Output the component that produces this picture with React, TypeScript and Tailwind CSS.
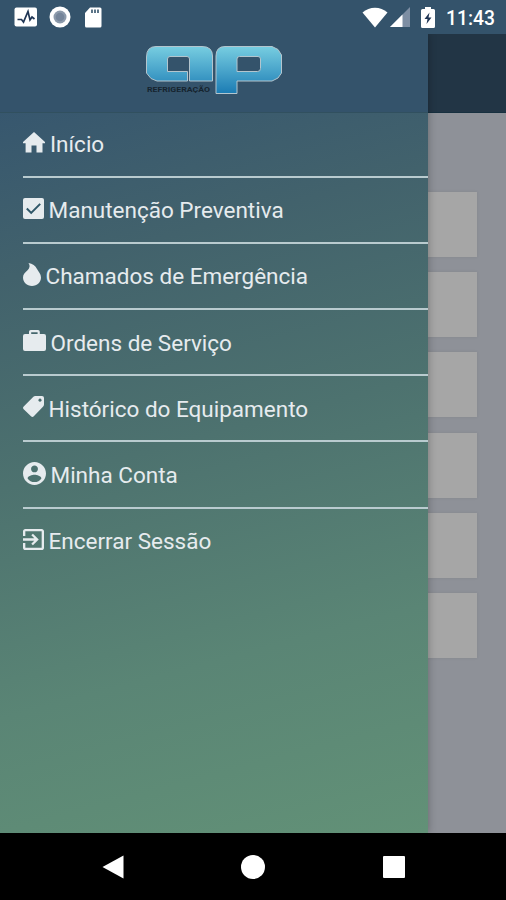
import React from 'react';
import { IoMdContact, IoMdExit } from 'react-icons/io';

interface MenuItem {
  label: string;
  icon: React.ReactNode;
  textClass: string;
}

const items: MenuItem[] = [
  {
    label: 'Início',
    icon: (
      <svg viewBox="0 0 22 21" className="w-[22px] h-[21px]">
        <path
          d="M11 0L22 10v1.200H19.500V20.500H13.500v-7h-5v7H2.600V11.200H0V10z"
          fill="currentColor"
        />
      </svg>
    ),
    textClass: 'ml-[5px]',
  },
  {
    label: 'Manutenção Preventiva',
    icon: (
      <svg viewBox="0 0 21 21" className="w-[21px] h-[21px]">
        <rect width="21" height="21" rx="2" fill="currentColor" />
        <path d="M3.800 10.500l4.400 4.400 9-9" fill="none" stroke="#2f5768" strokeWidth="2" />
      </svg>
    ),
    textClass: 'ml-[4.500px]',
  },
  {
    label: 'Chamados de Emergência',
    icon: (
      <svg viewBox="0 0 18 23" className="w-[18px] h-[23px]">
        <path
          d="M5.500 0C9.500.6 12.500 2.800 14 6 15.500 9 18 11 18 14.500 18 19.300 14.200 23 9 23s-9-3.700-9-8.500C0 11.200 2.200 9.500 4.300 7.500 6.800 5.300 7.400 2.500 5.500 0z"
          fill="currentColor"
        />
      </svg>
    ),
    textClass: 'ml-[4.500px]',
  },
  {
    label: 'Ordens de Serviço',
    icon: (
      <svg viewBox="0 0 23 21" className="w-[23px] h-[21px]">
        <path
          d="M6 4V1.800Q6 0 7.800 0h7.200q1.800 0 1.800 1.800V4H21q2 0 2 2v13q0 2-2 2H2q-2 0-2-2V6q0-2 2-2zM8.200 4h6.400V2.200H8.200z"
          fill="currentColor"
          fillRule="evenodd"
        />
      </svg>
    ),
    textClass: 'ml-[4.500px]',
  },
  {
    label: 'Histórico do Equipamento',
    icon: (
      <svg viewBox="0 0 21 21" className="w-[21px] h-[21px]">
        <path
          d="M12.200 0H19q2 0 2 2v6.500q0 1.200-.8 2l-9.400 9.700q-1.400 1.400-2.800 0L.7 13.200q-1.400-1.400 0-2.800L10.400.7Q11.200 0 12.200 0zM17 2.600a1.600 1.600 0 1 0 .01 0z"
          fill="currentColor"
          fillRule="evenodd"
        />
      </svg>
    ),
    textClass: 'ml-[4.500px]',
  },
  {
    label: 'Minha Conta',
    icon: <IoMdContact viewBox="48 48 416 416" className="w-[23px] h-[23px]" />,
    textClass: 'ml-[4.500px]',
  },
  {
    label: 'Encerrar Sessão',
    icon: <IoMdExit viewBox="64 64 384 384" className="w-[21px] h-[21px]" />,
    textClass: 'ml-[4.500px]',
  },
];

const cards = [1, 2, 3, 4, 5, 6];

const StatusBar: React.FC = () => (
  <div className="h-[34px] shrink-0 bg-[#34536b] flex items-center justify-between pl-[14px] pr-[11px] text-white">
    <div className="flex items-center">
      <svg viewBox="0 0 24 20" className="w-6 h-5">
        <rect x="0.500" y="0.500" width="22.500" height="19" rx="2" fill="currentColor" />
        <path d="M3.500 12.500h4l2 2.500 4.500-10.500 2 8.500 2-3 2.500 2" fill="none" stroke="#1f3554" strokeWidth="1.700" />
      </svg>
      <svg viewBox="0 0 22 22" className="w-[22px] h-[22px] ml-[11px]">
        <circle cx="11" cy="11" r="10.500" fill="currentColor" />
        <circle cx="11" cy="11" r="6.500" fill="#8c9aab" />
        <circle cx="11" cy="11" r="4.300" fill="#75859a" />
      </svg>
      <svg viewBox="0 0 18 21" className="w-[18px] h-[21px] ml-[13px]">
        <path d="M6 0.500h10q1.500 0 1.500 1.500v17q0 1.500-1.500 1.500H2.500Q1 20.500 1 19V6z" fill="currentColor" />
        <path d="M8 2.500v3.500M11 2.500v3.500M14 2.500v3.500" stroke="#34536b" strokeWidth="1.600" />
      </svg>
    </div>
    <div className="flex items-center">
      <svg viewBox="0 0 26 21" className="w-[26px] h-[21px]">
        <path d="M0.500 5.500C7.500-1 18.500-1 25.500 5.500L13 20.500z" fill="currentColor" />
      </svg>
      <svg viewBox="0 0 20 20" className="w-5 h-5 ml-0.5">
        <path d="M20 0v20H0z" fill="#7d8ea3" />
        <path d="M12.500 7.500V20H0z" fill="currentColor" />
      </svg>
      <svg viewBox="0 0 14 21" className="w-[14px] h-[21px] ml-[11px]">
        <path d="M4 0h6v2h2.500q1.500 0 1.500 1.500v16q0 1.500-1.500 1.500h-11Q0 21 0 19.500v-16Q0 2 1.500 2H4z" fill="currentColor" />
        <path d="M8.500 5.500L3.500 12h3l-1 5 5-6.500h-3z" fill="#1f3554" />
      </svg>
      <span className="ml-[11px] text-[19.300px] leading-none font-medium relative top-[1.500px]">11:43</span>
    </div>
  </div>
);

const Logo: React.FC = () => (
  <svg viewBox="0 0 138 52" className="w-[138px] h-[52px]">
    <defs>
      <linearGradient id="logo" x1="0" y1="0" x2="0" y2="50" gradientUnits="userSpaceOnUse">
        <stop offset="0" stopColor="#7ad0e2" />
        <stop offset="0.500" stopColor="#4aa5cb" />
        <stop offset="1" stopColor="#1879b2" />
      </linearGradient>
    </defs>
    <g fill="url(#logo)" stroke="#b3c5ce" strokeWidth="1">
      <path d="M11 1.500H57Q67.500 1.500 67.500 11V36H44.500V14Q44.500 11.500 42 11.500H25Q22.500 11.500 22.500 14V26.500H42.500V36H12L6 33.500 1.500 28V12Q1.500 1.500 11 1.500z" />
      <path d="M80 1.500H127L133 4.500 136.500 10V28L133 33 127 36H92V48.500H71V11Q71 1.500 80 1.500zM94.500 11.500Q92 11.500 92 14V26.500H112.500Q115.500 26.500 115.500 23.500V14Q115.500 11.500 113 11.500z" />
    </g>
    <text x="2" y="46.500" fontSize="8" fontWeight="700" fill="#16242f" textLength="63" lengthAdjust="spacingAndGlyphs">
      REFRIGERAÇÃO
    </text>
  </svg>
);

const Drawer: React.FC = () => (
  <aside className="w-[428px] shrink-0 flex flex-col relative z-10 shadow-[0_0_8px_rgba(0,0,0,0.3)] bg-[linear-gradient(165deg,#35556f_5%,#42626c_27%,#4d726f_50%,#5a8575_75%,#629177_100%)]">
    <div className="h-[79px] shrink-0 bg-[#34536b] border-b border-[#31505f] flex justify-center items-start pt-[11px]">
      <Logo />
    </div>
    <nav className="flex flex-col -mt-px pl-[23px] text-[#e6ebee]">
      {items.map((item, i) => (
        <div
          key={item.label}
          className={`h-[66.100px] flex items-center border-b-2 ${i < items.length - 1 ? 'border-[#b9cbcf]' : 'border-transparent'}`}
        >
          <span className="shrink-0 relative -top-[1.500px]">{item.icon}</span>
          <span className={`text-[22.500px] leading-none whitespace-nowrap relative top-[0.500px] ${item.textClass}`}>
            {item.label}
          </span>
        </div>
      ))}
    </nav>
  </aside>
);

const App: React.FC = () => {
  return (
    <div className="w-[506px] h-[900px] flex flex-col overflow-hidden bg-black font-[Roboto,sans-serif]">
      <StatusBar />
      <div className="h-[799px] flex overflow-hidden bg-[#8e9198]">
        <Drawer />
        <main className="flex-1">
          <div className="h-[79px] bg-[#223545] border-b border-[#17303f]" />
          <div className="pt-[79px] flex flex-col gap-[15.200px]">
            {cards.map((c) => (
              <div key={c} className="w-[49px] h-[65px] bg-[#a6a6a6] shadow-[0_0_3px_rgba(0,0,0,0.08)]" />
            ))}
          </div>
        </main>
      </div>
      <div className="h-[67px] flex items-center text-white">
        <svg viewBox="0 0 22 24" className="w-[22px] h-6 ml-[102px]">
          <path d="M21.500 0.500v23L0.500 12z" fill="currentColor" />
        </svg>
        <div className="w-6 h-6 rounded-full bg-white ml-[117px]" />
        <div className="w-[22px] h-[22px] rounded-[1px] bg-white ml-[118px]" />
      </div>
    </div>
  );
};

export default App;
